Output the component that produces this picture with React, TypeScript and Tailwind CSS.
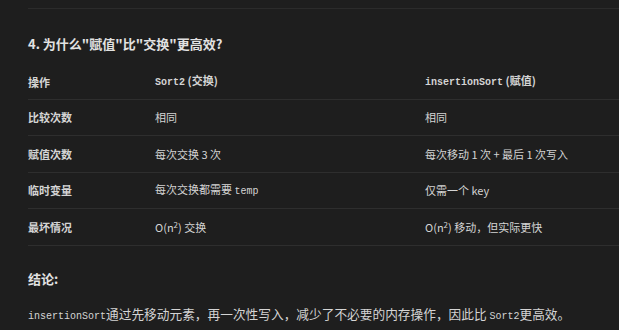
const cjk = "font-['Noto_Sans_CJK_SC','Noto_Sans',sans-serif]";
const mono = "font-['Liberation_Mono','Noto_Sans_CJK_SC',monospace] text-[10px]";

type Cell = React.ReactNode;

const rows: [string, Cell, Cell][] = [
  ["比较次数", "相同", "相同"],
  ["赋值次数", "每次交换 3 次", "每次移动 1 次 + 最后 1 次写入"],
  [
    "临时变量",
    <>每次交换都需要 <code className={mono}>temp</code></>,
    "仅需一个 key",
  ],
  [
    "最坏情况",
    <>O(n<sup className="text-[8px]">2</sup>) 交换</>,
    <>O(n<sup className="text-[8px]">2</sup>) 移动，但实际更快</>,
  ],
];

export default function App() {
  return (
    <div className={`w-[619px] h-[330px] overflow-hidden bg-[#1e1e1e] text-[#d4d4d4] ${cjk}`}>
      <div className="pl-[28px] pt-[8px]">
        <div className="border-t border-[#2b2b2b]" />

        <h4 className="mt-[26px] text-[13px] font-bold leading-[18px] text-[#e2e2e2]">
          4. 为什么"赋值"比"交换"更高效?
        </h4>

        <table className="mt-[12px] w-full table-fixed border-collapse text-[11px] leading-[16px]">
          <colgroup>
            <col className="w-[127px]" />
            <col className="w-[270px]" />
            <col />
          </colgroup>
          <thead>
            <tr className="h-[34px] border-b border-[#2e2e2e] text-left">
              <th className="p-0 font-bold">操作</th>
              <th className="p-0 font-bold">
                <code className={mono}>Sort2</code> (交换)
              </th>
              <th className="p-0 font-bold">
                <code className={mono}>insertionSort</code> (赋值)
              </th>
            </tr>
          </thead>
          <tbody>
            {rows.map(([a, b, c], i) => (
              <tr key={i} className="h-[36.6px] border-b border-[#2e2e2e]">
                <td className="p-0 font-bold">{a}</td>
                <td className="p-0">{b}</td>
                <td className="p-0">{c}</td>
              </tr>
            ))}
          </tbody>
        </table>

        <p className="mt-[24px] text-[13px] font-bold leading-[18px] text-[#e2e2e2]">结论:</p>

        <p className="mt-[17px] text-[12.7px] leading-[18px] whitespace-nowrap">
          <code className={mono}>insertionSort</code>通过先移动元素，再一次性写入，减少了不必要的内存操作，因此比 <code className={mono}>Sort2</code>更高效。
        </p>
      </div>
    </div>
  );
}
